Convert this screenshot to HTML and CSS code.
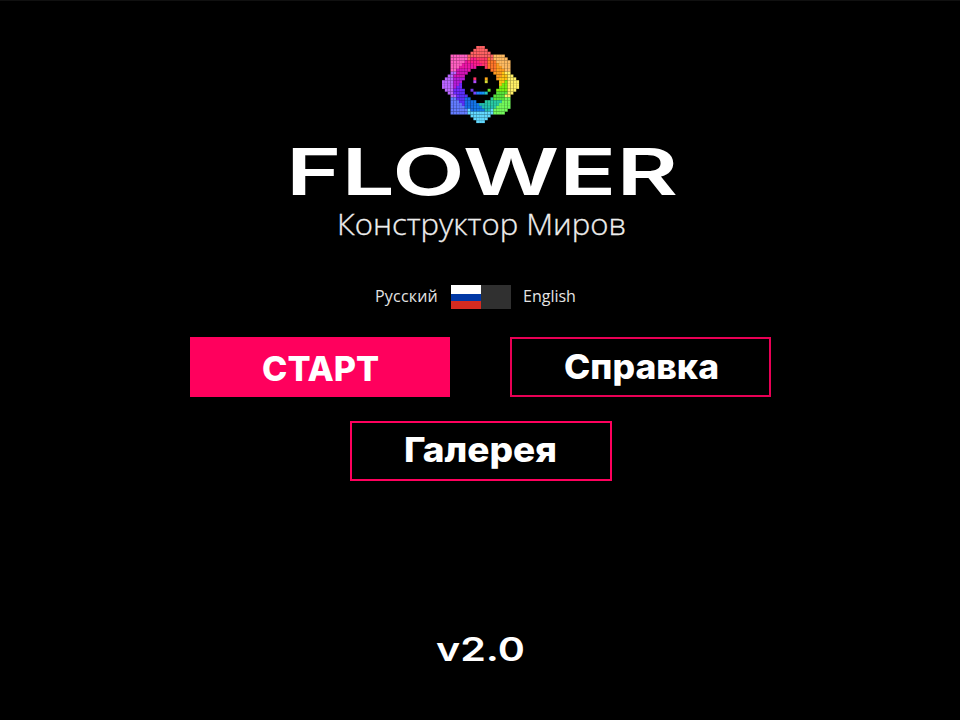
FILE: index.html
```html
<!DOCTYPE html>
<html lang="ru">
<head>
<meta charset="utf-8">
<title>FLOWER</title>
<link rel="stylesheet" href="styles.css">
</head>
<body>
<main class="screen">
  <svg class="logo" viewBox="0 0 27 27" aria-hidden="true"></svg>
  <h1 class="title"><svg width="388" height="60"><text x="-4" y="54" textLength="392" lengthAdjust="spacingAndGlyphs">FLOWER</text></svg></h1>
  <p class="subtitle"><svg width="290" height="40"><text x="0" y="28" textLength="289" lengthAdjust="spacingAndGlyphs">Конструктор Миров</text></svg></p>
  <div class="languages">
    <span class="language russian">Русский</span>
    <span class="switch"><i class="flag"></i></span>
    <span class="language english">English</span>
  </div>
  <nav class="menu">
    <a class="button primary"><svg width="118" height="44"><text x="1" y="36" textLength="117" lengthAdjust="spacingAndGlyphs">СТАРТ</text></svg></a>
    <a class="button"><svg width="156" height="44"><text x="1" y="34" textLength="155" lengthAdjust="spacingAndGlyphs">Справка</text></svg></a>
    <a class="button gallery"><svg width="154" height="44"><text x="0" y="33" textLength="153" lengthAdjust="spacingAndGlyphs">Галерея</text></svg></a>
  </nav>
  <footer class="version"><svg width="90" height="36"><text x="1" y="29" textLength="89" lengthAdjust="spacingAndGlyphs">v2.0</text></svg></footer>
</main>
<script src="script.js"></script>
</body>
</html>
```
FILE: styles.css
```css
* { box-sizing: border-box; }
body { margin: 0; background: #000; color: #fff; font-family: Inter, "Open Sans", sans-serif; }
svg { display: block; overflow: visible; }
text { fill: #fff; }
.screen { height: 720px; overflow: hidden; display: flex; flex-direction: column; align-items: center; border-top: 1px solid #101010; }
.logo { width: 77px; height: 77px; margin-top: 45px; flex: none; }
.logo rect { stroke: #000; stroke-opacity: .14; stroke-width: .1; }
.title { margin: 18px 0 0 8px; height: 60px; font-size: 65px; font-weight: 600; }
.subtitle { margin: 6px 0 0 4px; height: 40px; font: 300 29px "Open Sans", sans-serif; }
.subtitle text { fill: #eee; stroke: #eee; stroke-width: .3; }
.languages { display: grid; grid-template-columns: 63px 60px 54px; column-gap: 13px; align-items: center; height: 25px; margin: 37px 7px 0 0; }
.language { font: 16px/25px "Open Sans", sans-serif; color: #e4e4e4; white-space: nowrap; }
.russian { font-size: 16px; letter-spacing: .2px; }
.english { margin-left: -1px; }
.switch { display: block; height: 24px; background: #303030; }
.flag { display: block; width: 30px; height: 24px; background: linear-gradient(#fff 0 36%, #0038a5 36% 68%, #d62b20 68%); }
.menu { display: grid; grid-template-columns: 260px 261px; column-gap: 60px; row-gap: 24px; margin: 28px 0 0 1px; }
.button { height: 60px; border: 2px solid #e90055; display: flex; align-items: center; justify-content: center; font-size: 34px; font-weight: 800; }
.primary { background: #ff005d; border-color: #ff005d; }
.gallery { grid-column: 1 / -1; justify-self: center; width: 262px; height: 60px; border-color: #ff005d; }
.version { margin-top: 151px; height: 36px; font-size: 32px; font-weight: 600; }
```
FILE: script.js
```js
const logo = document.querySelector('.logo');
const petals = ['#fff066', '#74fa5c', '#62d9ff', '#637cff', '#b965ff', '#ff60c2', '#ff6264', '#ffbb62'];
const ring = ['#7aed12', '#57e43c', '#29cba5', '#23bfb0', '#1479ea', '#176ee8', '#5b30fa', '#7029ff',
  '#b51bd8', '#d414b6', '#ec16a6', '#ff1e8b', '#ff3868', '#ff7629', '#ff9c20', '#ffc414'];
// Each petal fans out from its own direction: right, then clockwise.
function petalAt(dx, dy) {
  const ax = Math.abs(dx), ay = Math.abs(dy);
  if (ax > 10 || (ax >= 9 && ay <= 4)) return petals[dx > 0 ? 0 : 4];
  if (ay > 10 || (ay >= 9 && ax <= 4)) return petals[dy > 0 ? 2 : 6];
  if (dx > 0) return petals[dy > 0 ? 1 : 7];
  return petals[dy > 0 ? 3 : 5];
}

function cell(x, y, color) {
  const r = document.createElementNS('http://www.w3.org/2000/svg', 'rect');
  r.setAttribute('x', x);
  r.setAttribute('y', y);
  r.setAttribute('width', 1.03);
  r.setAttribute('height', 1.03);
  r.setAttribute('fill', color);
  logo.append(r);
}

for (let y = 0; y < 27; y++) {
  for (let x = 0; x < 27; x++) {
    const dx = x - 13, dy = y - 13;
    const square = Math.abs(dx) <= 10 && Math.abs(dy) <= 10 && Math.abs(dx) + Math.abs(dy) < 19;
    const corner = dx < 0 && Math.abs(dx) <= 10 && Math.abs(dy) <= 10;
    const diamond = Math.abs(dx) + Math.abs(dy) <= 14;
    const d = Math.hypot(dx, dy);
    if ((!square && !corner && !diamond) || d < 6.3) continue;
    const turn = (Math.atan2(dy, dx) / (2 * Math.PI) + 1) % 1;
    if (d > 9.6) cell(x, y, petalAt(dx, dy));
    else cell(x, y, ring[Math.floor(((turn + (d - 7.5) * .012 + 1) % 1) * 16)]);
  }
}
[[11, 11, '#ff3268'], [11, 12, '#b34cff'], [15, 11, '#ffac18'], [15, 12, '#d9db35'],
  [10, 15, '#7139e8'], [16, 15, '#65e629'], [11, 16, '#7745ff'], [12, 16, '#247eff'],
  [13, 16, '#1688ff'], [14, 16, '#1596f3'], [15, 16, '#25c3bf']].forEach(p => cell(...p));
```
